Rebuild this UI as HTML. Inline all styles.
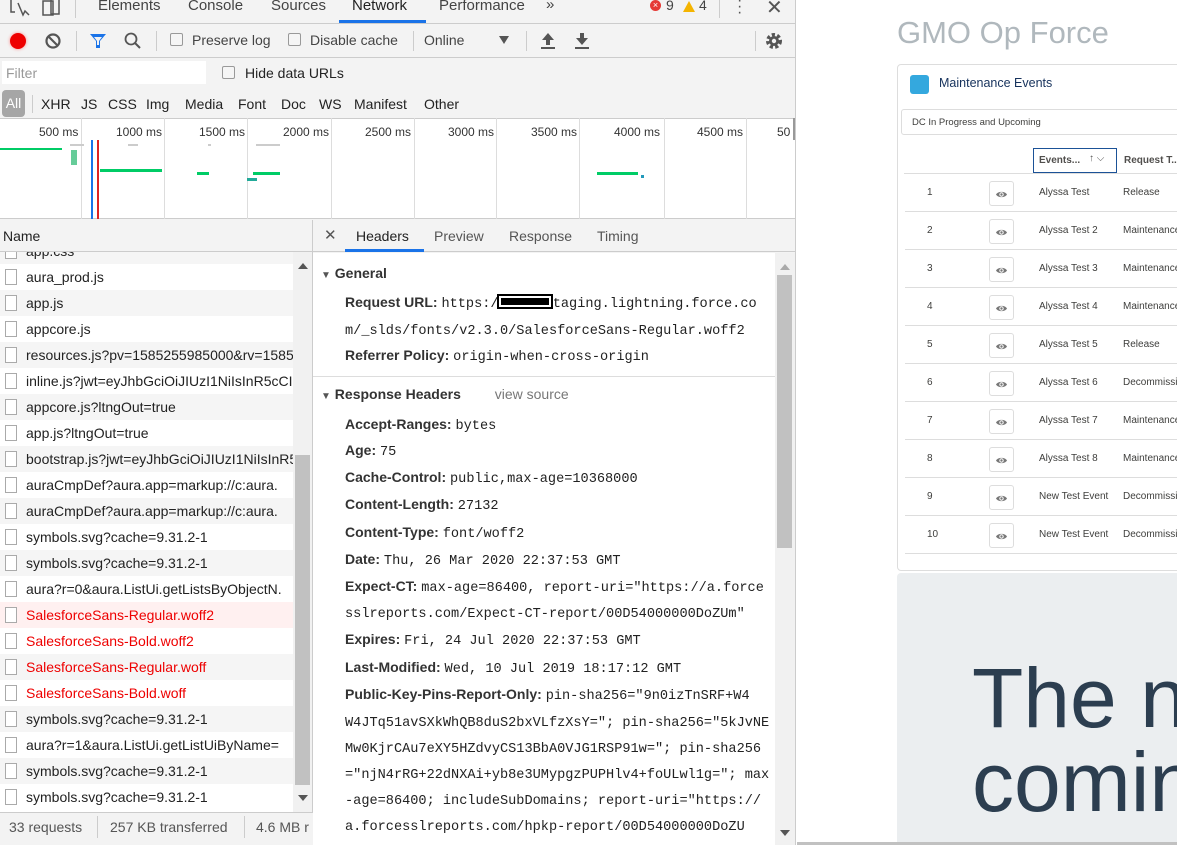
<!DOCTYPE html>
<html><head><meta charset="utf-8">
<style>
*{box-sizing:border-box;margin:0;padding:0}
body{width:1177px;height:845px;overflow:hidden;position:relative;background:#fff;font-family:"Liberation Sans",sans-serif;color:#333}
.a{position:absolute;white-space:nowrap}
.dt{position:absolute;left:0;top:0;width:796px;height:845px;background:#f3f3f3;border-right:1px solid #ccc;overflow:hidden}
.t{font-size:14px;color:#444}
.cb{position:absolute;width:13px;height:13px;border:1px solid #999;border-radius:2px;background:#f5f5f5}
.row{position:absolute;left:0;width:293px;height:26px;font-size:14px;line-height:26px;padding-left:26px;color:#222;overflow:hidden;white-space:nowrap}
.row i{position:absolute;left:5px;top:5px;width:12px;height:16px;border:1px solid #aaa;background:#fff}
.k{position:absolute;left:345px;font-size:14px;white-space:nowrap;color:#222}
.k b{color:#333}
.m{font-family:"Liberation Mono",monospace;font-size:13.6px;font-weight:normal;color:#222}
.tr{position:absolute;left:905px;width:272px;height:38px;border-bottom:1px solid #ddd;font-size:10px;color:#3e3e3c}
.eye{position:absolute;left:84px;top:7px;width:25px;height:25px;border:1px solid #ddd;border-radius:3px;background:#fff}
.eye svg{position:absolute;left:6px;top:8px}
</style></head><body>
<svg width="0" height="0" style="position:absolute"><defs><g id="ey"><path d="M0 4.5C2 1 9 1 11 4.5 9 8 2 8 0 4.5z" fill="#777"/><circle cx="5.5" cy="4.5" r="2.2" fill="#fff"/><circle cx="5.5" cy="4.5" r="1.2" fill="#777"/></g></defs></svg>
<div class="dt">
 <div class="a" style="left:0;top:23px;width:796px;height:1px;background:#ccc"></div>
 <svg class="a" style="left:8px;top:0" width="60" height="18"><path d="M3 0v12h4M10 3l5 12 2-4 4 4" stroke="#555" stroke-width="1.5" fill="none"/><rect x="35" y="1" width="10" height="14" stroke="#555" fill="none" stroke-width="1.5"/><rect x="43" y="-3" width="8" height="17" stroke="#555" fill="none" stroke-width="1.5"/></svg>
 <div class="a" style="left:75px;top:0;width:1px;height:18px;background:#ccc"></div>
 <div class="a t" style="left:98px;top:-3px;font-size:15px">Elements</div>
 <div class="a t" style="left:188px;top:-3px;font-size:15px">Console</div>
 <div class="a t" style="left:271px;top:-3px;font-size:15px">Sources</div>
 <div class="a t" style="left:352px;top:-3px;font-size:15px;color:#222">Network</div>
 <div class="a" style="left:339px;top:20px;width:87px;height:3px;background:#1a73e8"></div>
 <div class="a t" style="left:439px;top:-3px;font-size:15px">Performance</div>
 <div class="a t" style="left:546px;top:-4px;font-size:15px">»</div>
 <div class="a" style="left:650px;top:0;width:11px;height:11px;border-radius:50%;background:#e53935;color:#fff;font-size:9px;line-height:11px;text-align:center">×</div>
 <div class="a t" style="left:666px;top:-3px;font-size:14px">9</div>
 <div class="a" style="left:683px;top:1px;width:0;height:0;border-left:6px solid transparent;border-right:6px solid transparent;border-bottom:11px solid #f4b400"></div>
 <div class="a t" style="left:699px;top:-3px;font-size:14px">4</div>
 <div class="a" style="left:719px;top:0;width:1px;height:18px;background:#ccc"></div>
 <div class="a" style="left:737px;top:-2px;font-size:16px;color:#555;line-height:6px;width:4px;text-align:center">·<br>·<br>·</div>
 <div class="a" style="left:766px;top:-5px;font-size:20px;color:#555">✕</div>
 <div class="a" style="left:0;top:57px;width:796px;height:1px;background:#ccc"></div>
 <div class="a" style="left:10px;top:33px;width:16px;height:16px;border-radius:50%;background:#e00;box-shadow:0 0 3px #f88"></div>
 <svg class="a" style="left:44px;top:32px" width="18" height="18"><circle cx="9" cy="9" r="6.5" stroke="#555" stroke-width="2.2" fill="none"/><path d="M4.5 4.5l9 9" stroke="#555" stroke-width="2.2"/></svg>
 <div class="a" style="left:76px;top:31px;width:1px;height:20px;background:#ccc"></div>
 <svg class="a" style="left:89px;top:32px" width="18" height="18"><path d="M1 2h16l-6 7v7h-4v-7z" fill="#1a73e8"/><path d="M5 5h8l-3 4v4h-2v-4z" fill="#f3f3f3"/></svg>
 <svg class="a" style="left:123px;top:31px" width="20" height="20"><circle cx="8" cy="8" r="5.5" stroke="#555" stroke-width="1.8" fill="none"/><path d="M12 12l5 5" stroke="#555" stroke-width="2"/></svg>
 <div class="a" style="left:156px;top:31px;width:1px;height:20px;background:#ccc"></div>
 <div class="cb" style="left:170px;top:33px"></div>
 <div class="a t" style="left:192px;top:32px">Preserve log</div>
 <div class="cb" style="left:288px;top:33px"></div>
 <div class="a t" style="left:310px;top:32px">Disable cache</div>
 <div class="a" style="left:413px;top:31px;width:1px;height:20px;background:#ccc"></div>
 <div class="a t" style="left:424px;top:32px">Online</div>
 <div class="a" style="left:499px;top:36px;border-left:5px solid transparent;border-right:5px solid transparent;border-top:8px solid #555"></div>
 <div class="a" style="left:526px;top:31px;width:1px;height:20px;background:#ccc"></div>
 <svg class="a" style="left:540px;top:32px" width="16" height="18"><path d="M8 1l6 7h-4v5h-4v-5h-4z" fill="#555"/><rect x="1" y="15" width="14" height="2" fill="#555"/></svg>
 <svg class="a" style="left:574px;top:32px" width="16" height="18"><path d="M8 13l6-7h-4v-5h-4v5h-4z" fill="#555"/><rect x="1" y="15" width="14" height="2" fill="#555"/></svg>
 <div class="a" style="left:755px;top:31px;width:1px;height:20px;background:#ccc"></div>
 <svg class="a" style="left:764px;top:31px" width="20" height="20"><circle cx="10" cy="10" r="6" fill="none" stroke="#555" stroke-width="4" stroke-dasharray="3 2.2"/><circle cx="10" cy="10" r="5" fill="#555"/><circle cx="10" cy="10" r="2.2" fill="#f3f3f3"/></svg>
 <div class="a" style="left:2px;top:61px;width:204px;height:23px;background:#fff"></div>
 <div class="a" style="left:6px;top:65px;font-size:14px;color:#999">Filter</div>
 <div class="cb" style="left:222px;top:66px"></div>
 <div class="a t" style="left:245px;top:65px;color:#222">Hide data URLs</div>
 <div class="a" style="left:2px;top:90px;width:23px;height:27px;border-radius:4px;background:#a6a6a6;color:#fff;font-size:14px;line-height:27px;text-align:center">All</div>
 <div class="a" style="left:32px;top:95px;width:1px;height:18px;background:#ccc"></div>
 <div class="a t" style="left:41px;top:96px;color:#222">XHR</div>
 <div class="a t" style="left:81px;top:96px;color:#222">JS</div>
 <div class="a t" style="left:108px;top:96px;color:#222">CSS</div>
 <div class="a t" style="left:146px;top:96px;color:#222">Img</div>
 <div class="a t" style="left:185px;top:96px;color:#222">Media</div>
 <div class="a t" style="left:238px;top:96px;color:#222">Font</div>
 <div class="a t" style="left:281px;top:96px;color:#222">Doc</div>
 <div class="a t" style="left:319px;top:96px;color:#222">WS</div>
 <div class="a t" style="left:354px;top:96px;color:#222">Manifest</div>
 <div class="a t" style="left:424px;top:96px;color:#222">Other</div>
 <div class="a" style="left:0;top:118px;width:796px;height:101px;background:#fff;border-top:1px solid #ccc;border-bottom:1px solid #ccc"></div>
 <div class="a" style="left:81px;top:118px;width:1px;height:101px;background:#ddd"></div>
 <div class="a" style="left:164px;top:118px;width:1px;height:101px;background:#ddd"></div>
 <div class="a" style="left:247px;top:118px;width:1px;height:101px;background:#ddd"></div>
 <div class="a" style="left:331px;top:118px;width:1px;height:101px;background:#ddd"></div>
 <div class="a" style="left:414px;top:118px;width:1px;height:101px;background:#ddd"></div>
 <div class="a" style="left:496px;top:118px;width:1px;height:101px;background:#ddd"></div>
 <div class="a" style="left:579px;top:118px;width:1px;height:101px;background:#ddd"></div>
 <div class="a" style="left:664px;top:118px;width:1px;height:101px;background:#ddd"></div>
 <div class="a" style="left:746px;top:118px;width:1px;height:101px;background:#ddd"></div>
 <div class="a" style="left:793px;top:118px;width:3px;height:22px;background:#999"></div>
 <div class="a" style="top:125px;left:39px;font-size:12px;color:#333">500 ms</div>
 <div class="a" style="top:125px;left:116px;font-size:12px;color:#333">1000 ms</div>
 <div class="a" style="top:125px;left:199px;font-size:12px;color:#333">1500 ms</div>
 <div class="a" style="top:125px;left:283px;font-size:12px;color:#333">2000 ms</div>
 <div class="a" style="top:125px;left:365px;font-size:12px;color:#333">2500 ms</div>
 <div class="a" style="top:125px;left:448px;font-size:12px;color:#333">3000 ms</div>
 <div class="a" style="top:125px;left:531px;font-size:12px;color:#333">3500 ms</div>
 <div class="a" style="top:125px;left:614px;font-size:12px;color:#333">4000 ms</div>
 <div class="a" style="top:125px;left:697px;font-size:12px;color:#333">4500 ms</div>
 <div class="a" style="top:125px;left:777px;font-size:12px;color:#333">50</div>
 <div class="a" style="left:0;top:148px;width:62px;height:2px;background:#0c6"></div>
 <div class="a" style="left:70px;top:144px;width:14px;height:2px;background:#ccc"></div>
 <div class="a" style="left:71px;top:150px;width:6px;height:15px;background:#6c9"></div>
 <div class="a" style="left:91px;top:140px;width:1.5px;height:79px;background:#1a73e8"></div>
 <div class="a" style="left:97px;top:140px;width:1.5px;height:79px;background:#d22"></div>
 <div class="a" style="left:128px;top:144px;width:10px;height:2px;background:#ccc"></div>
 <div class="a" style="left:100px;top:169px;width:62px;height:3px;background:#0c6"></div>
 <div class="a" style="left:208px;top:144px;width:3px;height:2px;background:#ccc"></div>
 <div class="a" style="left:197px;top:172px;width:12px;height:3px;background:#0c6"></div>
 <div class="a" style="left:256px;top:144px;width:24px;height:2px;background:#ccc"></div>
 <div class="a" style="left:253px;top:172px;width:27px;height:3px;background:#0c6"></div>
 <div class="a" style="left:247px;top:178px;width:10px;height:3px;background:#2a9"></div>
 <div class="a" style="left:597px;top:172px;width:41px;height:3px;background:#0c6"></div>
 <div class="a" style="left:641px;top:175px;width:3px;height:3px;background:#29b"></div>
 <div class="a" style="left:0;top:220px;width:313px;height:32px;background:#f3f3f3;border-bottom:1px solid #ccc"></div>
 <div class="a" style="left:3px;top:228px;font-size:14px;color:#222">Name</div>
 <div class="a" style="left:312px;top:220px;width:1px;height:592px;background:#ccc"></div>
 <div style="position:absolute;left:0;top:252px;width:293px;height:560px;background:#fff;overflow:hidden">
  <div class="row" style="top:-14px;background:#f5f5f5"><i></i>app.css</div>
  <div class="row" style="top:12px"><i></i>aura_prod.js</div>
  <div class="row" style="top:38px;background:#f5f5f5"><i></i>app.js</div>
  <div class="row" style="top:64px"><i></i>appcore.js</div>
  <div class="row" style="top:90px;background:#f5f5f5"><i></i>resources.js?pv=1585255985000&amp;rv=1585</div>
  <div class="row" style="top:116px"><i></i>inline.js?jwt=eyJhbGciOiJIUzI1NiIsInR5cCI6</div>
  <div class="row" style="top:142px;background:#f5f5f5"><i></i>appcore.js?ltngOut=true</div>
  <div class="row" style="top:168px"><i></i>app.js?ltngOut=true</div>
  <div class="row" style="top:194px;background:#f5f5f5"><i></i>bootstrap.js?jwt=eyJhbGciOiJIUzI1NiIsInR5</div>
  <div class="row" style="top:220px"><i></i>auraCmpDef?aura.app=markup://c:aura.</div>
  <div class="row" style="top:246px;background:#f5f5f5"><i></i>auraCmpDef?aura.app=markup://c:aura.</div>
  <div class="row" style="top:272px"><i></i>symbols.svg?cache=9.31.2-1</div>
  <div class="row" style="top:298px;background:#f5f5f5"><i></i>symbols.svg?cache=9.31.2-1</div>
  <div class="row" style="top:324px"><i></i>aura?r=0&amp;aura.ListUi.getListsByObjectN.</div>
  <div class="row" style="top:350px;background:#fff0f0;color:#e00"><i></i>SalesforceSans-Regular.woff2</div>
  <div class="row" style="top:376px;color:#e00"><i></i>SalesforceSans-Bold.woff2</div>
  <div class="row" style="top:402px;background:#f5f5f5;color:#e00"><i></i>SalesforceSans-Regular.woff</div>
  <div class="row" style="top:428px;color:#e00"><i></i>SalesforceSans-Bold.woff</div>
  <div class="row" style="top:454px;background:#f5f5f5"><i></i>symbols.svg?cache=9.31.2-1</div>
  <div class="row" style="top:480px"><i></i>aura?r=1&amp;aura.ListUi.getListUiByName=</div>
  <div class="row" style="top:506px;background:#f5f5f5"><i></i>symbols.svg?cache=9.31.2-1</div>
  <div class="row" style="top:532px"><i></i>symbols.svg?cache=9.31.2-1</div>
 </div>
 <div class="a" style="left:293px;top:252px;width:19px;height:560px;background:#f1f1f1"></div>
 <div class="a" style="left:295px;top:455px;width:15px;height:330px;background:#c1c1c1"></div>
 <div class="a" style="left:298px;top:263px;border-left:5px solid transparent;border-right:5px solid transparent;border-bottom:6px solid #555"></div>
 <div class="a" style="left:298px;top:795px;border-left:5px solid transparent;border-right:5px solid transparent;border-top:6px solid #555"></div>
 <div class="a" style="left:0;top:812px;width:313px;height:33px;border-top:1px solid #ccc;background:#f3f3f3"></div>
 <div class="a" style="left:9px;top:819px;font-size:14px;color:#555">33 requests</div>
 <div class="a" style="left:97px;top:816px;width:1px;height:22px;background:#ccc"></div>
 <div class="a" style="left:110px;top:819px;font-size:14px;color:#555">257 KB transferred</div>
 <div class="a" style="left:244px;top:816px;width:1px;height:22px;background:#ccc"></div>
 <div class="a" style="left:256px;top:819px;font-size:14px;color:#555">4.6 MB r</div>
 <div class="a" style="left:313px;top:220px;width:483px;height:32px;background:#f3f3f3;border-bottom:1px solid #ccc"></div>
 <div class="a" style="left:324px;top:226px;font-size:15px;color:#555">✕</div>
 <div class="a" style="left:356px;top:228px;font-size:14px;color:#222">Headers</div>
 <div class="a" style="left:345px;top:249px;width:79px;height:3px;background:#1a73e8"></div>
 <div class="a" style="left:434px;top:228px;font-size:14px;color:#555">Preview</div>
 <div class="a" style="left:509px;top:228px;font-size:14px;color:#555">Response</div>
 <div class="a" style="left:597px;top:228px;font-size:14px;color:#555">Timing</div>
 <div class="a" style="left:313px;top:253px;width:462px;height:592px;background:#fff"></div>
 <div class="a" style="left:775px;top:253px;width:21px;height:592px;background:#f1f1f1"></div>
 <div class="a" style="left:777px;top:275px;width:15px;height:273px;background:#c1c1c1"></div>
 <div class="a" style="left:780px;top:264px;border-left:5px solid transparent;border-right:5px solid transparent;border-bottom:6px solid #aaa"></div>
 <div class="a" style="left:780px;top:830px;border-left:5px solid transparent;border-right:5px solid transparent;border-top:6px solid #555"></div>
 <div class="a" style="left:321px;top:265px;font-size:14px;color:#333"><span style="font-size:10px;color:#555">▼</span> <b>General</b></div>
 <div class="k" style="top:294px"><b>Request URL:</b> <span class="m">https://<span style="display:inline-block;width:56px;height:15px;background:#000;border:2px solid #000;box-shadow:inset 0 0 0 2px #fff;vertical-align:-2px;margin-left:-10px"></span>taging.lightning.force.co</span></div>
 <div class="k" style="top:321px"><span class="m">m/_slds/fonts/v2.3.0/SalesforceSans-Regular.woff2</span></div>
 <div class="k" style="top:347px"><b>Referrer Policy:</b> <span class="m">origin-when-cross-origin</span></div>
 <div class="a" style="left:313px;top:376px;width:462px;height:1px;background:#ddd"></div>
 <div class="a" style="left:321px;top:386px;font-size:14px;color:#333"><span style="font-size:10px;color:#555">▼</span> <b>Response Headers</b> <span style="margin-left:30px;color:#777">view source</span></div>
 <div class="k" style="top:416px"><b>Accept-Ranges:</b> <span class="m">bytes</span></div>
 <div class="k" style="top:442px"><b>Age:</b> <span class="m">75</span></div>
 <div class="k" style="top:469px"><b>Cache-Control:</b> <span class="m">public,max-age=10368000</span></div>
 <div class="k" style="top:496px"><b>Content-Length:</b> <span class="m">27132</span></div>
 <div class="k" style="top:524px"><b>Content-Type:</b> <span class="m">font/woff2</span></div>
 <div class="k" style="top:551px"><b>Date:</b> <span class="m">Thu, 26 Mar 2020 22:37:53 GMT</span></div>
 <div class="k" style="top:578px"><b>Expect-CT:</b> <span class="m">max-age=86400, report-uri="https://a.force</span></div>
 <div class="k" style="top:604px"><span class="m">sslreports.com/Expect-CT-report/00D54000000DoZUm"</span></div>
 <div class="k" style="top:631px"><b>Expires:</b> <span class="m">Fri, 24 Jul 2020 22:37:53 GMT</span></div>
 <div class="k" style="top:659px"><b>Last-Modified:</b> <span class="m">Wed, 10 Jul 2019 18:17:12 GMT</span></div>
 <div class="k" style="top:686px"><b>Public-Key-Pins-Report-Only:</b> <span class="m">pin-sha256="9n0izTnSRF+W4</span></div>
 <div class="k" style="top:713px"><span class="m">W4JTq51avSXkWhQB8duS2bxVLfzXsY="; pin-sha256="5kJvNE</span></div>
 <div class="k" style="top:739px"><span class="m">Mw0KjrCAu7eXY5HZdvyCS13BbA0VJG1RSP91w="; pin-sha256</span></div>
 <div class="k" style="top:765px"><span class="m">="njN4rRG+22dNXAi+yb8e3UMypgzPUPHlv4+foULwl1g="; max</span></div>
 <div class="k" style="top:791px"><span class="m">-age=86400; includeSubDomains; report-uri="https://</span></div>
 <div class="k" style="top:817px"><span class="m">a.forcesslreports.com/hpkp-report/00D54000000DoZU</span></div>
</div>
<div class="a" style="left:897px;top:15px;font-size:31px;color:#b0b8bd">GMO Op Force</div>
<div class="a" style="left:897px;top:64px;width:290px;height:507px;border:1px solid #ddd;border-radius:4px;background:#fff"></div>
<div class="a" style="left:910px;top:75px;width:19px;height:19px;border-radius:3px;background:#34a8de"></div>
<div class="a" style="left:939px;top:76px;font-size:12.5px;color:#16325c">Maintenance Events</div>
<div class="a" style="left:901px;top:109px;width:290px;height:26px;border:1px solid #ddd;border-radius:3px"></div>
<div class="a" style="left:912px;top:117px;font-size:9.5px;color:#3e3e3c">DC In Progress and Upcoming</div>
<div class="a" style="left:904px;top:173px;width:273px;height:1px;background:#ddd"></div>
<div class="a" style="left:1033px;top:148px;width:84px;height:25px;border:1px solid #1b5297"></div>
<div class="a" style="left:1039px;top:155px;font-size:10px;font-weight:bold;color:#514f4d">Events...</div>
<div class="a" style="left:1089px;top:153px;font-size:10px;color:#555">↑ ⌵</div>
<div class="a" style="left:1124px;top:155px;font-size:10px;font-weight:bold;color:#514f4d">Request T...</div>
<div class="tr" style="top:174px"><span class="a" style="left:22px;top:13px">1</span><div class="eye"><svg width="11" height="9"><use href="#ey"/></svg></div><span class="a" style="left:134px;top:13px">Alyssa Test</span><span class="a" style="left:218px;top:13px">Release</span></div>
<div class="tr" style="top:212px"><span class="a" style="left:22px;top:13px">2</span><div class="eye"><svg width="11" height="9"><use href="#ey"/></svg></div><span class="a" style="left:134px;top:13px">Alyssa Test 2</span><span class="a" style="left:218px;top:13px">Maintenance</span></div>
<div class="tr" style="top:250px"><span class="a" style="left:22px;top:13px">3</span><div class="eye"><svg width="11" height="9"><use href="#ey"/></svg></div><span class="a" style="left:134px;top:13px">Alyssa Test 3</span><span class="a" style="left:218px;top:13px">Maintenance</span></div>
<div class="tr" style="top:288px"><span class="a" style="left:22px;top:13px">4</span><div class="eye"><svg width="11" height="9"><use href="#ey"/></svg></div><span class="a" style="left:134px;top:13px">Alyssa Test 4</span><span class="a" style="left:218px;top:13px">Maintenance</span></div>
<div class="tr" style="top:326px"><span class="a" style="left:22px;top:13px">5</span><div class="eye"><svg width="11" height="9"><use href="#ey"/></svg></div><span class="a" style="left:134px;top:13px">Alyssa Test 5</span><span class="a" style="left:218px;top:13px">Release</span></div>
<div class="tr" style="top:364px"><span class="a" style="left:22px;top:13px">6</span><div class="eye"><svg width="11" height="9"><use href="#ey"/></svg></div><span class="a" style="left:134px;top:13px">Alyssa Test 6</span><span class="a" style="left:218px;top:13px">Decommission</span></div>
<div class="tr" style="top:402px"><span class="a" style="left:22px;top:13px">7</span><div class="eye"><svg width="11" height="9"><use href="#ey"/></svg></div><span class="a" style="left:134px;top:13px">Alyssa Test 7</span><span class="a" style="left:218px;top:13px">Maintenance</span></div>
<div class="tr" style="top:440px"><span class="a" style="left:22px;top:13px">8</span><div class="eye"><svg width="11" height="9"><use href="#ey"/></svg></div><span class="a" style="left:134px;top:13px">Alyssa Test 8</span><span class="a" style="left:218px;top:13px">Maintenance</span></div>
<div class="tr" style="top:478px"><span class="a" style="left:22px;top:13px">9</span><div class="eye"><svg width="11" height="9"><use href="#ey"/></svg></div><span class="a" style="left:134px;top:13px">New Test Event</span><span class="a" style="left:218px;top:13px">Decommission</span></div>
<div class="tr" style="top:516px"><span class="a" style="left:22px;top:13px">10</span><div class="eye"><svg width="11" height="9"><use href="#ey"/></svg></div><span class="a" style="left:134px;top:13px">New Test Event</span><span class="a" style="left:218px;top:13px">Decommission</span></div>
<div class="a" style="left:897px;top:573px;width:280px;height:272px;background:#ebeef0;border-radius:4px 0 0 0"></div>
<div class="a" style="left:972px;top:656px;font-size:84px;line-height:84px;color:#2c3e50">The n<br>comin</div>
<div class="a" style="left:797px;top:842px;width:380px;height:3px;background:#c1c1c1"></div>
</body></html>
